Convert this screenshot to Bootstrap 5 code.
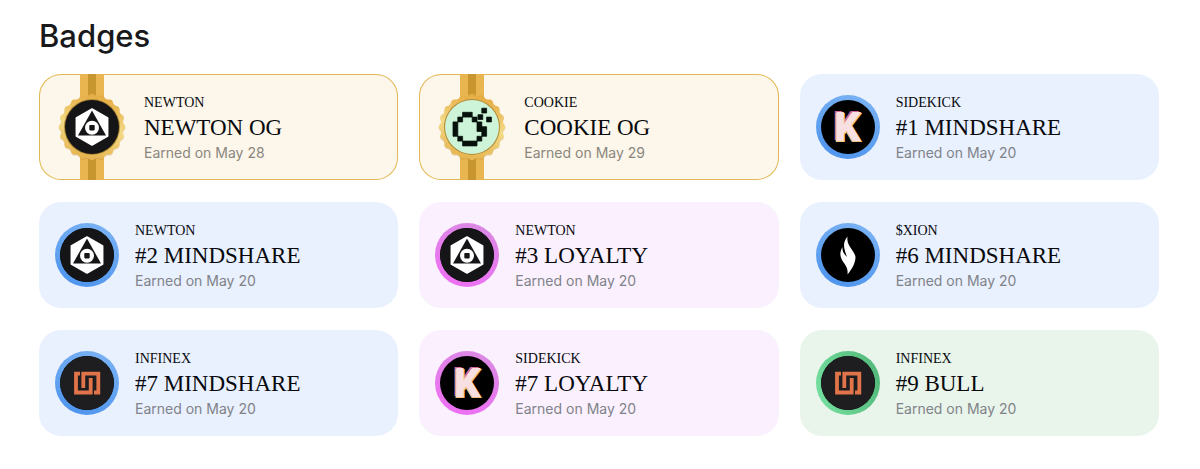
<!DOCTYPE html>
<html lang="en">
<head>
<meta charset="utf-8">
<meta name="viewport" content="width=device-width, initial-scale=1">
<title>Badges</title>
<link href="https://cdn.jsdelivr.net/npm/bootstrap@5.3.0/dist/css/bootstrap.min.css" rel="stylesheet">
<style>
  body { font-family: Inter, "Liberation Sans", sans-serif; color: #19191b; background: #fff; }
  .page { padding: 17px 41px 33px 39px; }
  .page-title { font-size: 31px; line-height: 38px; font-weight: 500; margin-bottom: 19px; }
  .badge-grid { --bs-gutter-x: 21px; --bs-gutter-y: 22px; }
  .award { border-radius: 22px; padding: 0 16px; gap: 16px; overflow: hidden; }
  .award-blue { background: #e9f0fe; --ring: linear-gradient(200deg, #7db4f4, #4a92ec); }
  .award-pink { background: #faf0fe; --ring: linear-gradient(200deg, #d98be2, #ef6df5); }
  .award-green { background: #e9f4ea; --ring: linear-gradient(250deg, #4fb577, #77e3a3); }
  .award-gold { background: #fdf6ea; box-shadow: inset 0 0 0 1px #e2b955; padding-left: 17px; }
  .seal { width: 64px; height: 64px; padding: 5px; border-radius: 50%; background: var(--ring); }
  .disc { width: 54px; height: 54px; border-radius: 50%; background: #000; overflow: hidden; }
  .ribbon { width: 72px; background: linear-gradient(90deg, #e8b551 8px, #c7962f 8px 16px, #e8b551 16px) center / 24px 100% no-repeat; }
  .award-text { padding: 18px 0 16px; }
  .project { font: 400 14px/22px "Liberation Serif", serif; color: #07090d; }
  .rank { font: 400 23px/28px "Liberation Serif", serif; color: #07090d; }
  .earned { font-size: 14px; line-height: 22px; color: #808389; }
  .award-gold .earned { color: #8a867e; }
  .k-mark { font: 900 41px/54px Roboto, sans-serif; color: #f7dfe2; text-shadow: 1px 1px 0 #f2c27c, -1px 1px 0 #f2c27c, -2px -1px 0 #d0689a; }
</style>
</head>
<body>
<svg width="0" height="0" class="position-absolute" aria-hidden="true">
  <defs>
    <linearGradient id="gold" x1=".6" y1="0" x2=".4" y2="1"><stop offset="0" stop-color="#e5a93f"/><stop offset=".5" stop-color="#f3da86"/><stop offset="1" stop-color="#e5b24c"/></linearGradient>
    <symbol id="newton" viewBox="-27 -27 54 54">
      <circle r="27" fill="#151517"/>
      <path d="M0-18 15.700-9V9L0 18-15.700 9V-9Z" fill="#fff" stroke="#fff" stroke-width="1.500" stroke-linejoin="round"/>
      <path d="M0-16.500 14 8.500H-14Z" fill="#151517"/>
      <circle cy=".7" r="7" fill="#fff"/><rect x="-2.700" y="-2" width="5.400" height="5.400" rx=".8" fill="#151517"/>
    </symbol>
    <symbol id="cookie" viewBox="-27 -27 54 54">
      <circle r="27" fill="#cdf3d8"/>
      <path transform="translate(-19 -14.700) scale(4.800)" d="M2 0h2v1h-2ZM1 1h1v1h-1ZM4 1h1v1h1v1h-1v-1h-1ZM0 2h1v3h-1ZM5 3h2v2h-1v-1h-1ZM1 5h1v1h-1ZM5 5h1v1h-1ZM2 6h3v1h-3ZM6-.85h1v1h-1ZM5.200.5h1v1h-1ZM7 1h1v1h-1Z" fill="#07110b" stroke="#07110b" stroke-width=".16"/>
    </symbol>
    <symbol id="flame" viewBox="-27 -27 54 54">
      <path d="M-.5-18.500C-6-12-4-6-1 2C-4-1-6-4-5.500-8C-9-2-8 3-4 8C-1 12 0 15-.5 19.500C4 14 7.500 8 7.500 2C6.500-5-2-9-.5-18.500Z" fill="#fff"/>
    </symbol>
    <symbol id="infinex" viewBox="-27 -27 54 54">
      <circle r="27" fill="#1e1e21"/>
      <path d="M-7-9.300H-11V9.500H3.700V-5M7 9.500H11.300V-9.300H-3.700V5" fill="none" stroke="#e2744a" stroke-width="3.800"/>
    </symbol>
  </defs>
</svg>
<main class="page container-fluid">
  <h1 class="page-title">Badges</h1>
  <div class="row row-cols-3 badge-grid" id="grid"></div>
</main>
<script src="https://cdn.jsdelivr.net/npm/bootstrap@5.3.0/dist/js/bootstrap.bundle.min.js"></script>
<script>
  const awards = [
    ['gold', 'newton', 'NEWTON', 'NEWTON OG', 'May 28'],
    ['gold', 'cookie', 'COOKIE', 'COOKIE OG', 'May 29'],
    ['blue', 'k', 'SIDEKICK', '#1 MINDSHARE', 'May 20'],
    ['blue', 'newton', 'NEWTON', '#2 MINDSHARE', 'May 20'],
    ['pink', 'newton', 'NEWTON', '#3 LOYALTY', 'May 20'],
    ['blue', 'flame', '$XION', '#6 MINDSHARE', 'May 20'],
    ['blue', 'infinex', 'INFINEX', '#7 MINDSHARE', 'May 20'],
    ['pink', 'k', 'SIDEKICK', '#7 LOYALTY', 'May 20'],
    ['green', 'infinex', 'INFINEX', '#9 BULL', 'May 20']
  ];
  // Scalloped rim: the radius waves 20 times around the medal.
  let rim = '';
  for (let i = 0; i < 240; i++) {
    const a = i * Math.PI / 120, r = 32.3 + Math.cos(20 * a);
    rim += (i ? 'L' : 'M') + (r * Math.cos(a)).toFixed(2) + ' ' + (r * Math.sin(a)).toFixed(2);
  }
  const icon = name => name === 'k'
    ? '<div class="disc k-mark text-center">K</div>'
    : `<div class="disc"><svg class="d-block" width="54" height="54" aria-hidden="true"><use href="#${name}"/></svg></div>`;
  const medal = name => `<div class="ribbon align-self-stretch d-flex align-items-center flex-shrink-0">
    <svg width="72" height="72" viewBox="-36 -36 72 72" aria-hidden="true">
      <path d="${rim}Z" transform="translate(0 1)" fill="#b98b3a" opacity=".35"/><path d="${rim}Z" fill="url(#gold)"/>
      <circle r="28" fill="#b18a35"/><use href="#${name}" x="-27" y="-27" width="54" height="54"/>
    </svg></div>`;
  document.getElementById('grid').innerHTML = awards.map(([tone, art, project, rank, day]) => `
    <div class="col"><article class="award award-${tone} d-flex align-items-center">
      ${tone === 'gold' ? medal(art) : `<div class="seal flex-shrink-0">${icon(art)}</div>`}
      <div class="award-text"><div class="project">${project}</div><h2 class="rank mb-0">${rank}</h2><div class="earned">Earned on ${day}</div></div>
    </article></div>`).join('');
</script>
</body>
</html>
